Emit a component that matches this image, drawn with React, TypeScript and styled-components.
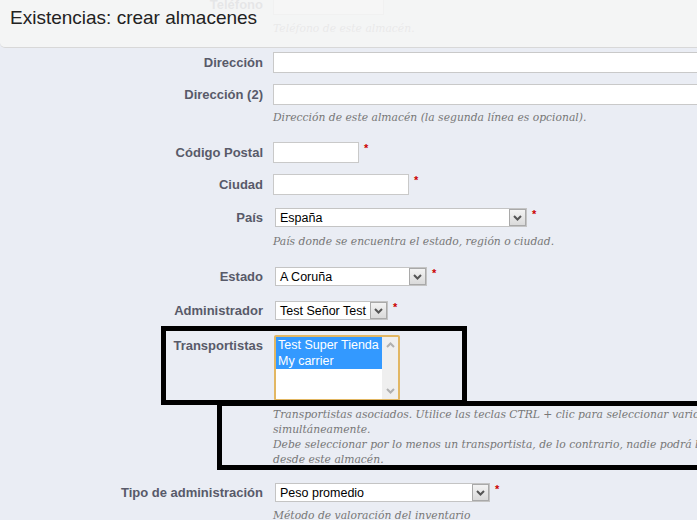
import styled, { createGlobalStyle } from "styled-components";

const GlobalStyle = createGlobalStyle`
  html, body {
    margin: 0;
    padding: 0;
    overflow: hidden;
    background: #eaedf4;
  }
  body {
    font-family: "Liberation Sans", Arial, sans-serif;
  }
`;

const Screen = styled.div`
  position: relative;
  width: 697px;
  height: 520px;
  overflow: hidden;
  background: #eaedf4;
`;

const Toolbar = styled.div`
  position: absolute;
  top: 0;
  left: 0;
  right: -10px;
  height: 47px;
  background: rgba(245, 245, 245, 0.9);
  border-bottom: 1px solid #d8d8d8;
  border-bottom-left-radius: 5px;
  z-index: 2;
`;

const Title = styled.h1`
  margin: 0;
  padding-left: 10px;
  font-size: 19px;
  font-weight: normal;
  line-height: 35px;
  color: #222;
`;

const Form = styled.div`
  margin-top: -6px;
`;

const Row = styled.div<{ $after: number }>`
  display: grid;
  grid-template-columns: 263px auto;
  column-gap: 10px;
  align-items: center;
  margin-bottom: ${(p) => p.$after}px;
`;

const Label = styled.label<{ $top?: boolean }>`
  grid-column: 1;
  grid-row: 1;
  align-self: ${(p) => (p.$top ? "start" : "center")};
  padding-top: ${(p) => (p.$top ? "3px" : "0")};
  text-align: right;
  font-size: 13px;
  font-weight: bold;
  line-height: 15px;
  color: #585a69;
  white-space: nowrap;
`;

const Field = styled.div`
  grid-column: 2;
  grid-row: 1;
  display: flex;
  align-items: flex-start;
`;

const Help = styled.p<{ $mt: number }>`
  grid-column: 2;
  grid-row: 2;
  margin: ${(p) => p.$mt}px 0 0;
  font-family: "DejaVu Serif", serif;
  font-style: italic;
  font-size: 10.75px;
  line-height: 15px;
  color: #777;
  white-space: nowrap;
`;

const TextInput = styled.input<{ $w: number }>`
  box-sizing: border-box;
  width: ${(p) => p.$w}px;
  height: 21px;
  margin: 0;
  padding: 0 3px;
  border: 1px solid #c9c9c9;
  background: #fff;
  outline: none;
`;

const Select = styled.div<{ $w: number }>`
  box-sizing: border-box;
  width: ${(p) => p.$w}px;
  height: 19px;
  margin-left: 2px;
  display: flex;
  align-items: center;
  background: #fff;
  border: 1px solid #c4c4c4;
  font-size: 12.5px;
  color: #000;
`;

const SelectText = styled.span`
  flex: 1;
  padding-left: 4px;
  white-space: nowrap;
  overflow: hidden;
`;

const ArrowButton = styled.span`
  box-sizing: border-box;
  width: 17px;
  height: 17px;
  display: flex;
  align-items: center;
  justify-content: center;
  border: 1px solid #a9a9a9;
  background: linear-gradient(#f3f3f3, #dadada);
`;

const ListBox = styled.div`
  box-sizing: border-box;
  width: 126px;
  height: 66px;
  margin-left: 1px;
  display: flex;
  border: 2px solid #e2b763;
  border-radius: 2px;
  background: #fff;
`;

const Options = styled.div`
  flex: 1;
  overflow: hidden;
`;

const Option = styled.div<{ $selected?: boolean }>`
  height: 16px;
  line-height: 16px;
  padding-left: 2px;
  font-size: 12.5px;
  white-space: nowrap;
  background: ${(p) => (p.$selected ? "#3399ff" : "#fff")};
  color: ${(p) => (p.$selected ? "#fff" : "#000")};
`;

const ScrollTrack = styled.div`
  width: 16px;
  display: flex;
  flex-direction: column;
  justify-content: space-between;
  align-items: center;
  padding: 5px 0;
  background: #efefef;
`;

const Required = styled.span`
  margin-left: 5px;
  margin-top: 1px;
  font-size: 11px;
  font-weight: bold;
  line-height: 1;
  color: #cc0000;
`;

const Annotation = styled.div<{ $x: number; $y: number; $w: number; $h: number }>`
  position: absolute;
  left: ${(p) => p.$x}px;
  top: ${(p) => p.$y}px;
  width: ${(p) => p.$w}px;
  height: ${(p) => p.$h}px;
  box-sizing: border-box;
  border: 5px solid #000;
  pointer-events: none;
  z-index: 1;
`;

const Chevron = ({ up, color = "#555" }: { up?: boolean; color?: string }) => (
  <svg width="9" height="6" viewBox="0 0 9 6">
    <path
      d={up ? "M1 5L4.5 1.5L8 5" : "M1 1L4.5 4.5L8 1"}
      stroke={color}
      strokeWidth="2"
      fill="none"
    />
  </svg>
);

const SelectField = ({ w, value }: { w: number; value: string }) => (
  <Select $w={w}>
    <SelectText>{value}</SelectText>
    <ArrowButton>
      <Chevron />
    </ArrowButton>
  </Select>
);

export default function App() {
  return (
    <Screen>
      <GlobalStyle />
      <Toolbar>
        <Title>Existencias: crear almacenes</Title>
      </Toolbar>

      <Form>
        <Row $after={16}>
          <Label>Teléfono</Label>
          <Field>
            <TextInput $w={111} readOnly />
          </Field>
          <Help $mt={6}>Teléfono de este almacén.</Help>
        </Row>

        <Row $after={11}>
          <Label>Dirección</Label>
          <Field>
            <TextInput $w={440} readOnly />
          </Field>
        </Row>

        <Row $after={17}>
          <Label>Dirección (2)</Label>
          <Field>
            <TextInput $w={440} readOnly />
          </Field>
          <Help $mt={5}>Dirección de este almacén (la segunda línea es opcional).</Help>
        </Row>

        <Row $after={11}>
          <Label>Código Postal</Label>
          <Field>
            <TextInput $w={86} readOnly />
            <Required>*</Required>
          </Field>
        </Row>

        <Row $after={13}>
          <Label>Ciudad</Label>
          <Field>
            <TextInput $w={136} readOnly />
            <Required>*</Required>
          </Field>
        </Row>

        <Row $after={18}>
          <Label>País</Label>
          <Field>
            <SelectField w={252} value="España" />
            <Required>*</Required>
          </Field>
          <Help $mt={7}>País donde se encuentra el estado, región o ciudad.</Help>
        </Row>

        <Row $after={15}>
          <Label>Estado</Label>
          <Field>
            <SelectField w={152} value="A Coruña" />
            <Required>*</Required>
          </Field>
        </Row>

        <Row $after={15}>
          <Label>Administrador</Label>
          <Field>
            <SelectField w={113} value="Test Señor Test" />
            <Required>*</Required>
          </Field>
        </Row>

        <Row $after={16}>
          <Label $top>Transportistas</Label>
          <Field>
            <ListBox>
              <Options>
                <Option $selected>Test Super Tienda</Option>
                <Option $selected>My carrier</Option>
              </Options>
              <ScrollTrack>
                <Chevron up color="#b0b0b0" />
                <Chevron color="#b0b0b0" />
              </ScrollTrack>
            </ListBox>
          </Field>
          <Help $mt={6}>
            Transportistas asociados. Utilice las teclas CTRL + clic para seleccionar varios transportistas
            <br />
            simultáneamente.
            <br />
            Debe seleccionar por lo menos un transportista, de lo contrario, nadie podrá llevar pedidos
            <br />
            desde este almacén.
          </Help>
        </Row>

        <Row $after={0}>
          <Label>Tipo de administración</Label>
          <Field>
            <SelectField w={215} value="Peso promedio" />
            <Required>*</Required>
          </Field>
          <Help $mt={6}>Método de valoración del inventario</Help>
        </Row>
      </Form>

      <Annotation $x={161} $y={326} $w={306} $h={79} />
      <Annotation $x={217} $y={401} $w={600} $h={69} />
    </Screen>
  );
}
